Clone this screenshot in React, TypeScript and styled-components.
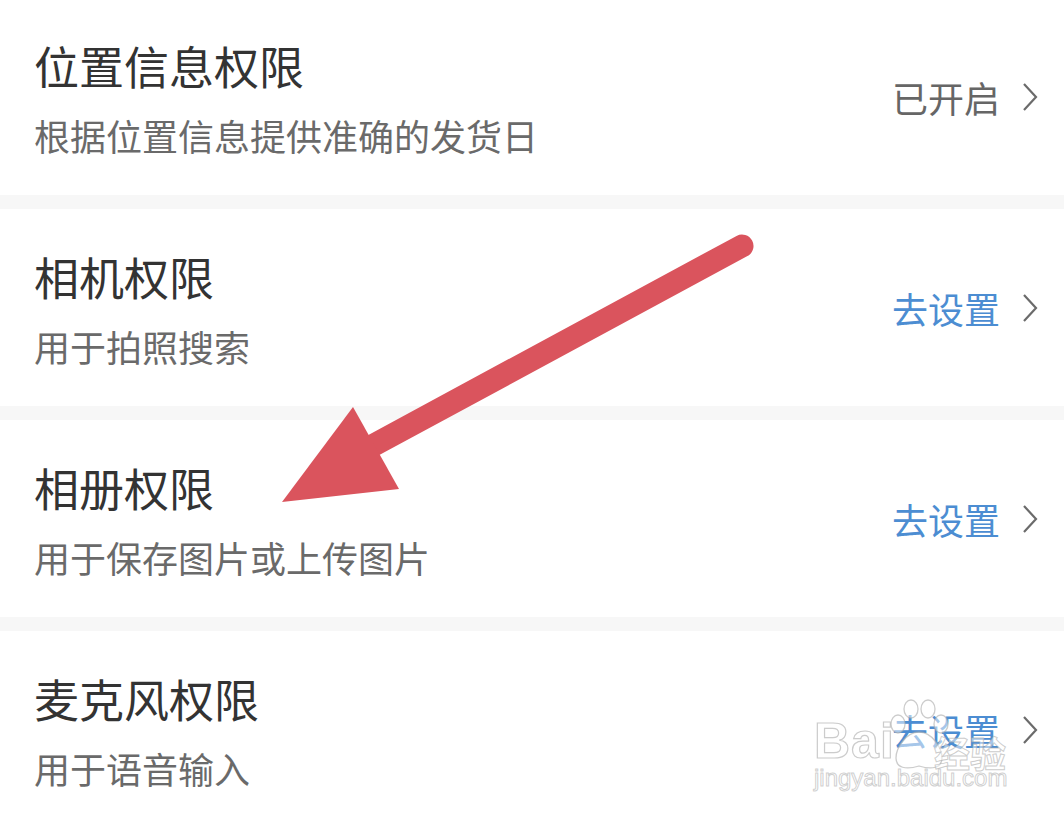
import styled, { createGlobalStyle } from "styled-components";

const GlobalStyle = createGlobalStyle`
  html, body {
    margin: 0;
    padding: 0;
    background: #f7f7f7;
  }
  body {
    font-family: "Noto Sans CJK SC", "Noto Sans", sans-serif;
    -webkit-font-smoothing: antialiased;
  }
`;

const Page = styled.div`
  position: relative;
  width: 1064px;
  height: 816px;
  overflow: hidden;
  background: #f7f7f7;
`;

const List = styled.div`
  display: flex;
  flex-direction: column;
  gap: 14px;
  margin-top: -2px;
`;

const Row = styled.div`
  height: 197px;
  flex-shrink: 0;
  background: #fff;
  display: flex;
  align-items: flex-start;
  justify-content: space-between;
  padding: 0 26px 0 34px;
  box-sizing: border-box;
`;

const Texts = styled.div`
  display: flex;
  flex-direction: column;
  padding-top: 41px;
`;

const Title = styled.div`
  font-size: 45px;
  line-height: 54px;
  color: #333;
`;

const Desc = styled.div`
  margin-top: 20px;
  font-size: 36px;
  line-height: 44px;
  color: #6a6a6a;
`;

const Action = styled.div`
  align-self: center;
  display: flex;
  align-items: center;
  gap: 22px;
`;

const Status = styled.span<{ $link?: boolean }>`
  font-size: 36px;
  line-height: 44px;
  color: ${(p) => (p.$link ? "#4c8dd2" : "#666")};
`;

const Chevron = () => (
  <svg width="16" height="30" viewBox="0 0 16 30">
    <path d="M2 2 L14 15 L2 28" fill="none" stroke="#6b6b6b" strokeWidth="2.2" />
  </svg>
);

const Overlay = styled.svg`
  position: absolute;
  inset: 0;
  pointer-events: none;
`;

const Watermark = styled.div`
  position: absolute;
  left: 812px;
  top: 692px;
  width: 200px;
  height: 110px;
  pointer-events: none;
`;

const WmBaidu = styled.span`
  position: absolute;
  left: 2px;
  top: 20px;
  font-family: "Liberation Sans", Arial, sans-serif;
  font-size: 50px;
  font-weight: 700;
  color: rgba(255, 255, 255, 0.55);
  -webkit-text-stroke: 1.2px rgba(170, 170, 170, 0.6);
  letter-spacing: 1px;
`;

const WmJing = styled.span`
  position: absolute;
  left: 122px;
  top: 34px;
  font-size: 36px;
  font-weight: 700;
  color: rgba(255, 255, 255, 0.5);
  -webkit-text-stroke: 1px rgba(170, 170, 170, 0.6);
`;

const WmUrl = styled.span`
  position: absolute;
  left: 2px;
  top: 72px;
  font-family: "Liberation Sans", Arial, sans-serif;
  font-size: 24px;
  color: rgba(255, 255, 255, 0.5);
  -webkit-text-stroke: 1px rgba(175, 175, 175, 0.6);
`;

const Paw = styled.svg`
  position: absolute;
  left: 72px;
  top: 4px;
`;

const rows = [
  { title: "位置信息权限", desc: "根据位置信息提供准确的发货日", status: "已开启", link: false },
  { title: "相机权限", desc: "用于拍照搜索", status: "去设置", link: true },
  { title: "相册权限", desc: "用于保存图片或上传图片", status: "去设置", link: true },
  { title: "麦克风权限", desc: "用于语音输入", status: "去设置", link: true },
];

export default function App() {
  return (
    <Page>
      <GlobalStyle />
      <List>
        {rows.map((r) => (
          <Row key={r.title}>
            <Texts>
              <Title>{r.title}</Title>
              <Desc>{r.desc}</Desc>
            </Texts>
            <Action>
              <Status $link={r.link}>{r.status}</Status>
              <Chevron />
            </Action>
          </Row>
        ))}
      </List>

      <Overlay width="1064" height="816" viewBox="0 0 1064 816">
        <line x1="742" y1="246" x2="372" y2="446" stroke="#da545d" strokeWidth="23" strokeLinecap="round" />
        <polygon points="282,502 353,407 399,489" fill="#da545d" />
      </Overlay>

      <Watermark>
        <Paw width="70" height="80" viewBox="0 0 70 80">
          <g fill="rgba(255,255,255,0.5)" stroke="rgba(170,170,170,0.6)" strokeWidth="1.3">
            <ellipse cx="14" cy="28" rx="7" ry="9" />
            <ellipse cx="27" cy="13" rx="7" ry="9" />
            <ellipse cx="44" cy="13" rx="7" ry="9" />
            <ellipse cx="57" cy="28" rx="7" ry="9" />
            <path d="M35 36 C22 36 12 52 12 62 C12 72 22 74 35 70 C48 74 58 72 58 62 C58 52 48 36 35 36 Z" />
          </g>
        </Paw>
        <WmBaidu>Bai</WmBaidu>
        <WmJing>经验</WmJing>
        <WmUrl>jingyan.baidu.com</WmUrl>
      </Watermark>
    </Page>
  );
}
